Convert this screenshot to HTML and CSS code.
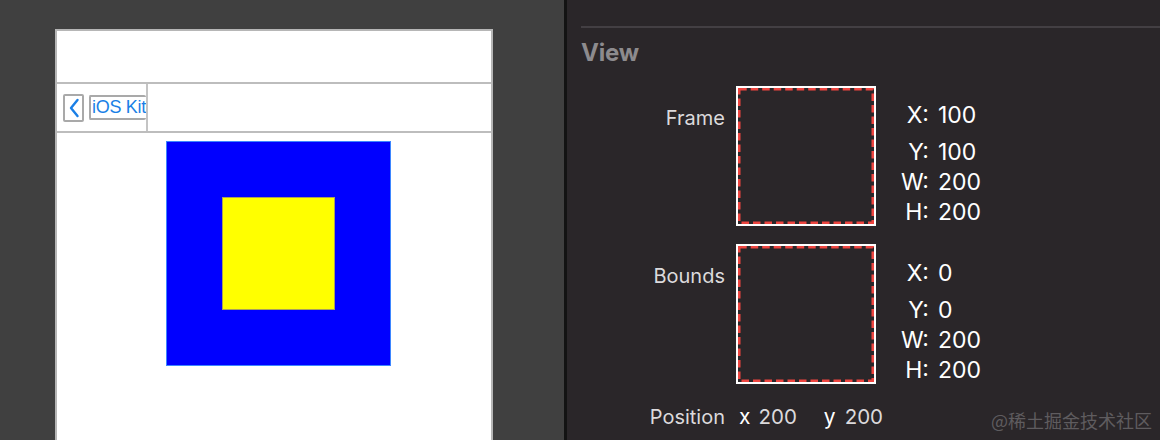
FILE: index.html
```html
<!DOCTYPE html>
<html>
<head>
<meta charset="utf-8">
<link rel="stylesheet" href="styles.css">
</head>
<body>
<div class="left">
  <div class="phone">
    <div class="status"></div>
    <div class="navbar">
      <div class="back">
        <div class="chev-box">
          <svg width="12" height="20" viewBox="0 0 12 20"><path d="M9.5 2 L3 10 L9.5 18" fill="none" stroke="#1a7fe6" stroke-width="2.4" stroke-linecap="round" stroke-linejoin="round"/></svg>
        </div>
        <div class="back-title">iOS Kit</div>
      </div>
    </div>
    <div class="canvas">
      <div class="blue"><div class="yellow"></div></div>
    </div>
  </div>
</div>
<div class="divider"></div>
<div class="right">
  <div class="rule"></div>
  <div class="heading">View</div>
  <div class="prop">
    <div class="prop-label">Frame</div>
    <div class="box"><svg width="136" height="136" viewBox="0 0 136 136"><rect x="1.2" y="1.2" width="133.6" height="133.6" fill="none" stroke="#ee4540" stroke-width="2.6" stroke-dasharray="7.5 4"/></svg></div>
    <div class="vals">
      <span class="k first">X:</span><span class="v first">100</span>
      <span class="k">Y:</span><span class="v">100</span>
      <span class="k">W:</span><span class="v">200</span>
      <span class="k">H:</span><span class="v">200</span>
    </div>
  </div>
  <div class="prop bounds">
    <div class="prop-label">Bounds</div>
    <div class="box"><svg width="136" height="136" viewBox="0 0 136 136"><rect x="1.2" y="1.2" width="133.6" height="133.6" fill="none" stroke="#ee4540" stroke-width="2.6" stroke-dasharray="7.5 4"/></svg></div>
    <div class="vals">
      <span class="k first">X:</span><span class="v first">0</span>
      <span class="k">Y:</span><span class="v">0</span>
      <span class="k">W:</span><span class="v">200</span>
      <span class="k">H:</span><span class="v">200</span>
    </div>
  </div>
  <div class="position">
    <div class="prop-label">Position</div>
    <div class="pos-vals">
      <span class="axis">x</span><span class="num">200</span>
      <span class="axis y">y</span><span class="num">200</span>
    </div>
  </div>
  <div class="watermark">@稀土掘金技术社区</div>
</div>
</body>
</html>
```
FILE: styles.css
```css
html, body {
  margin: 0;
  padding: 0;
}
body {
  width: 1160px;
  height: 440px;
  overflow: hidden;
  display: flex;
  font-family: Inter, "Noto Sans", sans-serif;
}
.left {
  width: 564px;
  flex: none;
  background: #404040;
  padding: 29px 0 0 55px;
  box-sizing: border-box;
}
.phone {
  width: 438px;
  height: 420px;
  box-sizing: border-box;
  border: 2px solid #b6b6b6;
  border-bottom: none;
  background: #fff;
}
.status {
  height: 51px;
  border-bottom: 2px solid #bdbdbd;
}
.navbar {
  height: 47px;
  border-bottom: 2px solid #bdbdbd;
  display: flex;
}
.back {
  width: 91px;
  box-sizing: border-box;
  border-right: 2px solid #c4c4c4;
  display: flex;
  align-items: center;
  padding-left: 6px;
  gap: 5px;
}
.chev-box {
  width: 17px;
  height: 24px;
  border: 2px solid #a9a9a9;
  border-radius: 2px;
  display: flex;
  align-items: center;
  justify-content: center;
}
.back-title {
  flex: 1;
  height: 21px;
  border: 2px solid #a9a9a9;
  border-radius: 2px;
  border-right: none;
  font-family: "Liberation Sans", Arial, sans-serif;
  font-size: 18px;
  line-height: 21px;
  color: #1a7fe6;
  padding-left: 1px;
  letter-spacing: -0.3px;
  white-space: nowrap;
  overflow: hidden;
}
.canvas {
  padding: 8px 0 0 109px;
}
.blue {
  width: 225px;
  height: 225px;
  box-sizing: border-box;
  background: #0000ff;
  border: 1px solid #3d86ff;
  display: flex;
  align-items: center;
  justify-content: center;
}
.yellow {
  width: 113px;
  height: 113px;
  box-sizing: border-box;
  background: #ffff00;
  border: 1px solid #a8a05a;
}
.divider {
  width: 3px;
  flex: none;
  background: #131313;
}
.right {
  flex: 1;
  background: #2a2629;
  position: relative;
  padding-left: 14px;
}
.rule {
  margin-top: 26px;
  height: 2px;
  background: #433f43;
}
.heading {
  margin-top: 13px;
  font-size: 24px;
  line-height: 24px;
  font-weight: 700;
  color: #8d8b8e;
  letter-spacing: -0.2px;
}
.prop {
  margin-top: 21px;
  margin-left: -14px;
  display: grid;
  grid-template-columns: 158px 140px auto;
  column-gap: 11px;
  align-items: start;
}
.prop.bounds {
  margin-top: 17px;
}
.prop-label {
  margin-top: 20px;
  text-align: right;
  font-size: 20px;
  line-height: 24px;
  color: #dcdadc;
}
.box {
  width: 140px;
  height: 140px;
  box-sizing: border-box;
  border: 2px solid #ffffff;
}
.box svg {
  display: block;
}
.vals {
  margin-left: 8px;
  margin-top: 14px;
  display: grid;
  grid-template-columns: 34px auto;
  column-gap: 9px;
  font-size: 23px;
  line-height: 30px;
  color: #ffffff;
}
.k {
  text-align: right;
}
.k.first, .v.first {
  margin-bottom: 7px;
}
.position {
  margin-top: 20px;
  margin-left: -14px;
  display: grid;
  grid-template-columns: 158px auto;
  column-gap: 14px;
}
.position .prop-label {
  margin-top: 0;
}
.pos-vals {
  font-size: 20.5px;
  line-height: 24px;
  color: #dcdadc;
  display: flex;
}
.axis {
  color: #ffffff;
  font-size: 21px;
  margin-right: 8px;
}
.axis.y {
  margin-left: 27px;
  margin-right: 9px;
}
.watermark {
  position: absolute;
  right: 8px;
  bottom: 8px;
  font-family: "Noto Sans CJK SC", "Noto Sans", sans-serif;
  font-size: 18px;
  line-height: 24px;
  color: #5f5c5f;
}
```
